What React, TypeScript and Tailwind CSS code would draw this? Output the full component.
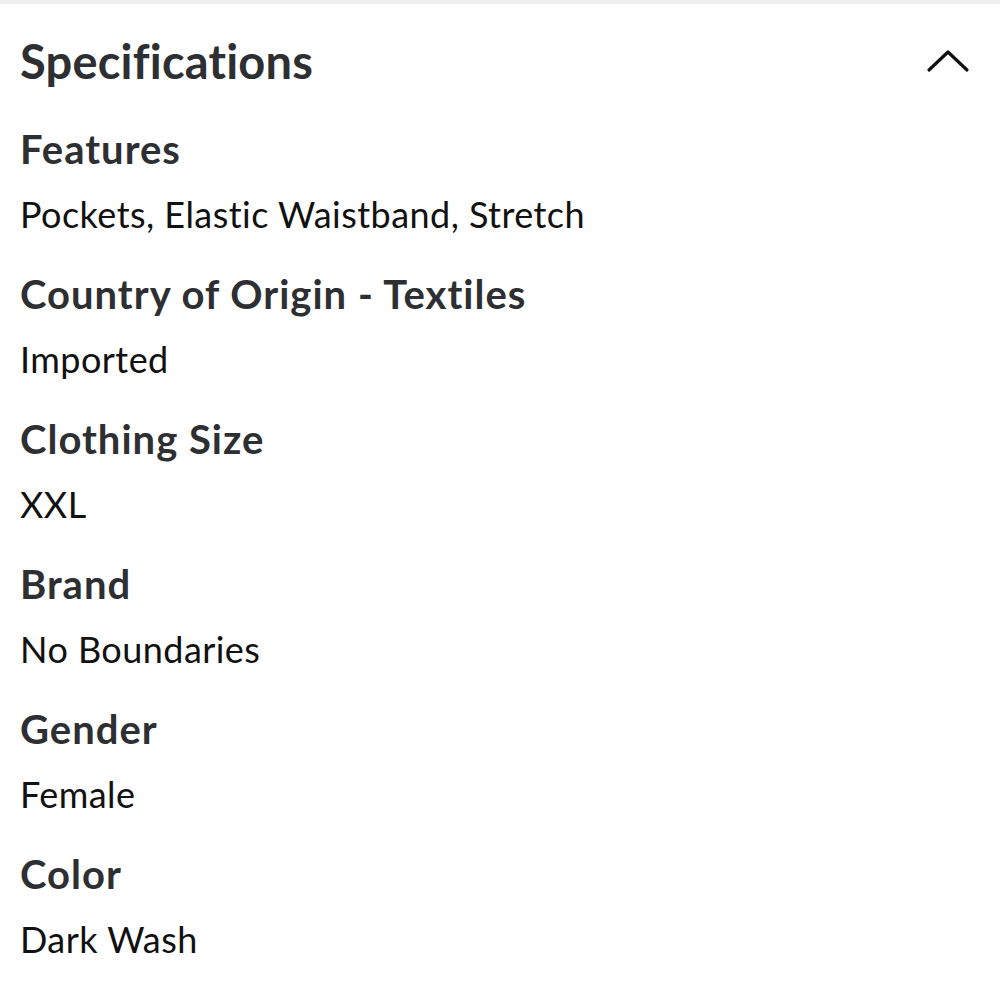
import { ReactNode } from 'react'

const specs = [
  { label: 'Features', value: 'Pockets, Elastic Waistband, Stretch' },
  { label: 'Country of Origin - Textiles', value: 'Imported' },
  { label: 'Clothing Size', value: 'XXL' },
  { label: 'Brand', value: 'No Boundaries' },
  { label: 'Gender', value: 'Female' },
  { label: 'Color', value: 'Dark Wash' },
]

function SpecRow({ label, children }: { label: string; children: ReactNode }) {
  return (
    <div className="flex flex-col">
      <h3 className="text-[40px] leading-[40px] font-bold tracking-[1px] text-[#2e2f32]">{label}</h3>
      <p className="mt-[25px] text-[36px] leading-[40px] tracking-[0.45px] text-[#111]">{children}</p>
    </div>
  )
}

export default function App() {
  return (
    <div className="min-h-screen w-full bg-white font-['Lato',sans-serif]">
      <div className="h-[4px] w-full bg-[#f0f0f0]" />
      <section className="px-[20px] pt-[31px]">
        {/* Section header with collapse chevron */}
        <div className="flex items-center justify-between">
          <h2 className="text-[47px] leading-[52px] font-bold tracking-[0.2px] text-[#2e2f32]">Specifications</h2>
          <svg width="44" height="24" viewBox="0 0 44 24" className="mr-[10px]" fill="none">
            <polyline
              points="3,21 22,3 41,21"
              stroke="#111"
              strokeWidth="3.2"
              strokeLinecap="round"
              strokeLinejoin="round"
            />
          </svg>
        </div>

        <div className="mt-[42px] flex flex-col gap-[40px]">
          {specs.map((s) => (
            <SpecRow key={s.label} label={s.label}>
              {s.value}
            </SpecRow>
          ))}
        </div>
      </section>
    </div>
  )
}
